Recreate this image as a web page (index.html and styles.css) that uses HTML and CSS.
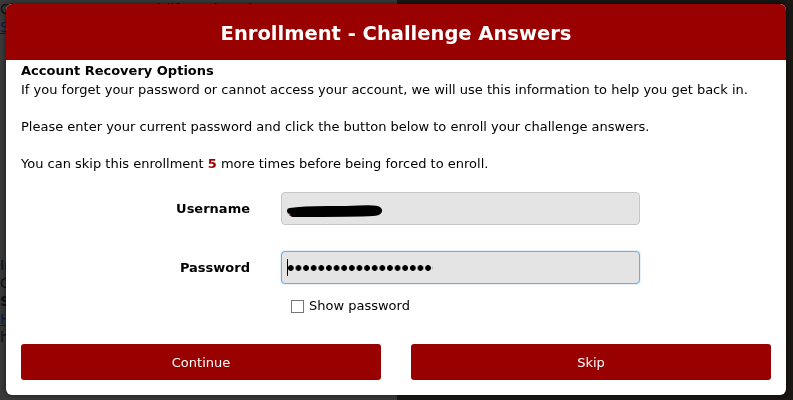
FILE: index.html
```html
<!DOCTYPE html>
<html lang="en">
<head>
    <meta charset="utf-8">
    <title>Enrollment - Challenge Answers</title>
    <link rel="stylesheet" href="styles.css">
</head>
<body>

<div class="backdrop">
    <div class="page-left">
        <p class="faded">Change your password (if you have)</p>
        <p><a href="#">Self-Service Password Reset</a></p>
        <p class="faded spaced">Information</p>
        <p class="faded">Contact</p>
        <p class="faded"><b>Support</b></p>
        <p><a href="#">Help Desk</a></p>
        <p class="faded">http://www.c.edu/IT/Pages/helpdesk.aspx</p>
    </div>
    <div class="page-right"></div>
</div>

<div class="modal">
    <div class="modal-header">Enrollment - Challenge Answers</div>

    <div class="modal-body">
        <p>
            <b>Account Recovery Options</b><br>
            If you forget your password or cannot access your account, we will use this information to help you get back in.
        </p>
        <p>Please enter your current password and click the button below to enroll your challenge answers.</p>
        <p>You can skip this enrollment <b class="text-red">5</b> more times before being forced to enroll.</p>

        <div class="form">
            <label class="form-label row-first">Username</label>
            <div class="field row-first">
                <svg class="redact" width="96" height="14" viewBox="0 0 96 14">
                    <path d="M3 8 C 20 5, 40 6, 60 6 C 72 6, 82 4, 90 6 C 94 7, 92 10, 86 10 C 70 11, 40 11, 6 11" stroke="#000" stroke-width="6" fill="none" stroke-linecap="round"/>
                    <path d="M3 10 L3 13" stroke="#8a0000" stroke-width="1"/>
                </svg>
            </div>

            <label class="form-label">Password</label>
            <div class="field field-focus"><span class="caret"></span><span class="dots"></span></div>

            <div></div>
            <label class="show-pass"><span class="checkbox"></span>Show password</label>
        </div>

        <div class="buttons">
            <button class="btn">Continue</button>
            <button class="btn">Skip</button>
        </div>
    </div>
</div>

</body>
</html>
```

FILE: styles.css
```css
* {
    margin: 0;
    padding: 0;
    box-sizing: border-box;
}

body {
    width: 793px;
    height: 400px;
    overflow: hidden;
    font-family: "DejaVu Sans", Verdana, sans-serif;
    font-size: 13px;
}

.backdrop {
    display: flex;
    height: 400px;
}

.page-left {
    width: 397px;
    background-color: #3a3a3a;
    color: #111;
    line-height: 18px;
    font-size: 14px;
}

.page-left .spaced {
    margin-top: 220px;
}

.page-left a {
    color: #0b1d4a;
}

.page-right {
    flex: 1;
    background-color: #1a1714;
}

.modal {
    position: fixed;
    left: 6px;
    top: 4px;
    width: 780px;
    height: 391px;
    background-color: #fff;
    border-radius: 6px;
    overflow: hidden;
    box-shadow: 0 0 6px rgba(0, 0, 0, 0.6);
}

.modal-header {
    height: 56px;
    background-color: #990000;
    color: #fff;
    font-size: 19.5px;
    font-weight: bold;
    display: flex;
    align-items: center;
    justify-content: center;
    padding-top: 2px;
}

.modal-body {
    padding: 2px 15px 0;
    color: #000;
    line-height: 18.5px;
}

.modal-body p {
    margin-bottom: 18.5px;
}

.modal-body p:nth-of-type(3) {
    margin-bottom: 0;
}

.text-red {
    color: #990000;
}

.form {
    display: grid;
    grid-template-columns: 229px 359px;
    column-gap: 31px;
    margin-top: 19px;
    align-items: center;
}

.row-first {
    margin-bottom: 26px;
}

.form-label {
    font-weight: bold;
    text-align: right;
    height: 33px;
    line-height: 33px;
}

.field {
    height: 33px;
    background-color: #e4e4e4;
    border: 1px solid #c6c6c6;
    border-radius: 4px;
    padding-left: 5px;
    display: flex;
    align-items: center;
}

.field-focus {
    border-color: #66afe9;
    box-shadow: 0 0 2px rgba(102, 175, 233, 0.6);
}

.caret {
    width: 1px;
    height: 17px;
    background-color: #000;
}

.dots {
    width: 145px;
    height: 8px;
    background-image: radial-gradient(circle, #000 2.6px, transparent 3.1px);
    background-size: 7.63px 8px;
    background-position: -1px 0;
}

.redact {
    display: block;
    margin-top: 2px;
}

.show-pass {
    display: flex;
    align-items: center;
    margin-top: 13px;
    padding-left: 10px;
    line-height: 18px;
}

.checkbox {
    width: 13px;
    height: 13px;
    border: 1px solid #767676;
    background-color: #fff;
    margin-right: 5px;
}

.buttons {
    display: flex;
    gap: 30px;
    margin-top: 29px;
}

.btn {
    flex: 1;
    height: 36px;
    background-color: #990000;
    color: #fff;
    border: none;
    border-radius: 3px;
    font-family: "DejaVu Sans", Verdana, sans-serif;
    font-size: 13px;
}
```
